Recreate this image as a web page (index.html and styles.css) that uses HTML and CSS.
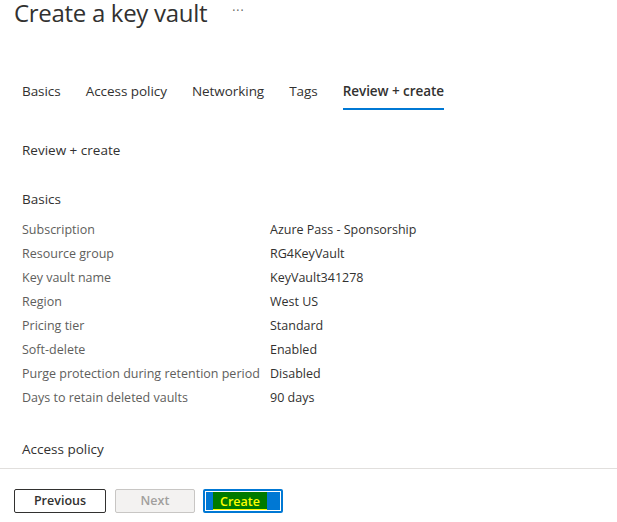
FILE: index.html
```html
<!DOCTYPE html>
<html>
<head>
<meta charset="utf-8">
<link rel="stylesheet" href="styles.css">
</head>
<body>
<div class="page">
  <header class="title-row">
    <h1 class="title">Create a key vault</h1>
    <span class="more">···</span>
  </header>
  <nav class="tabs">
    <span class="tab">Basics</span>
    <span class="tab">Access policy</span>
    <span class="tab">Networking</span>
    <span class="tab">Tags</span>
    <span class="tab active">Review + create</span>
  </nav>
  <main class="content">
    <div class="heading">Review + create</div>
    <div class="section-title">Basics</div>
    <div class="grid">
      <div class="label">Subscription</div><div class="value">Azure Pass - Sponsorship</div>
      <div class="label">Resource group</div><div class="value">RG4KeyVault</div>
      <div class="label">Key vault name</div><div class="value">KeyVault341278</div>
      <div class="label">Region</div><div class="value">West US</div>
      <div class="label">Pricing tier</div><div class="value">Standard</div>
      <div class="label">Soft-delete</div><div class="value">Enabled</div>
      <div class="label">Purge protection during retention period</div><div class="value">Disabled</div>
      <div class="label">Days to retain deleted vaults</div><div class="value">90 days</div>
    </div>
    <div class="section-title second">Access policy</div>
  </main>
  <footer class="footer">
    <button class="btn">Previous</button>
    <button class="btn disabled">Next</button>
    <button class="btn primary"><span class="hl">Create</span></button>
  </footer>
</div>
</body>
</html>
```
FILE: styles.css
```css
* { box-sizing: border-box; }
html, body { margin: 0; padding: 0; background: #fff; }
body {
  font-family: "Open Sans", "Noto Sans", sans-serif;
  color: #323130;
  font-size: 12.5px;
  overflow: hidden;
}
.page { width: 617px; height: 522px; display: flex; flex-direction: column; }
.title-row {
  display: flex;
  align-items: center;
  gap: 25px;
  padding-left: 14px;
  height: 26px;
}
.title {
  margin: 0;
  font-size: 24px;
  font-weight: 400;
  line-height: 26px;
  letter-spacing: -0.3px;
  color: #323130;
}
.more { font-size: 12px; color: #605e5c; letter-spacing: 1px; margin-top: -6px; }
.tabs {
  display: flex;
  gap: 25px;
  padding-left: 22px;
  margin-top: 52px;
  height: 32px;
  align-items: stretch;
}
.tab {
  font-size: 13.5px;
  letter-spacing: -0.05px;
  color: #323130;
  padding-top: 4px;
  border-bottom: 2px solid transparent;
}
.tab.active { font-weight: 600; border-bottom-color: #0078d4; }
.content { padding-left: 22px; flex: 1; }
.heading { font-size: 13.5px; margin-top: 30px; line-height: 20px; }
.section-title { font-size: 13.5px; margin-top: 29px; line-height: 20px; }
.section-title.second { margin-top: 27px; }
.grid {
  display: grid;
  grid-template-columns: 248px auto;
  grid-auto-rows: 24px;
  margin-top: 11px;
  line-height: 20px;
}
.label { color: #605e5c; }
.value { color: #323130; }
.footer {
  flex: 0 0 54px;
  border-top: 1px solid #e1dfdd;
  display: flex;
  gap: 9px;
  padding: 20px 0 0 14px;
  align-items: flex-start;
}
.btn {
  font-family: "Open Sans", "Noto Sans", sans-serif;
  font-size: 12.5px;
  font-weight: 600;
  height: 24px;
  width: 92px;
  border: 1px solid #323130;
  border-radius: 2px;
  background: #fff;
  color: #323130;
  padding: 0;
  line-height: 20px;
}
.btn.disabled {
  width: 80px;
  color: #a19f9d;
  background: #f3f2f1;
  border-color: #c8c6c4;
}
.btn.primary {
  width: 80px;
  margin-left: -1px;
  background: #0078d4;
  border: 2px solid #0078d4;
  outline: 1px solid #fff;
  outline-offset: -3px;
  display: flex;
  justify-content: center;
  align-items: stretch;
  padding: 1px 14px 1px 8px;
}
.hl {
  display: block;
  background: #007a00;
  color: #ffff00;
  padding: 0 6px;
  line-height: 19px;
  border-bottom: 1px solid #ffff00;
  width: 100%;
}
```
